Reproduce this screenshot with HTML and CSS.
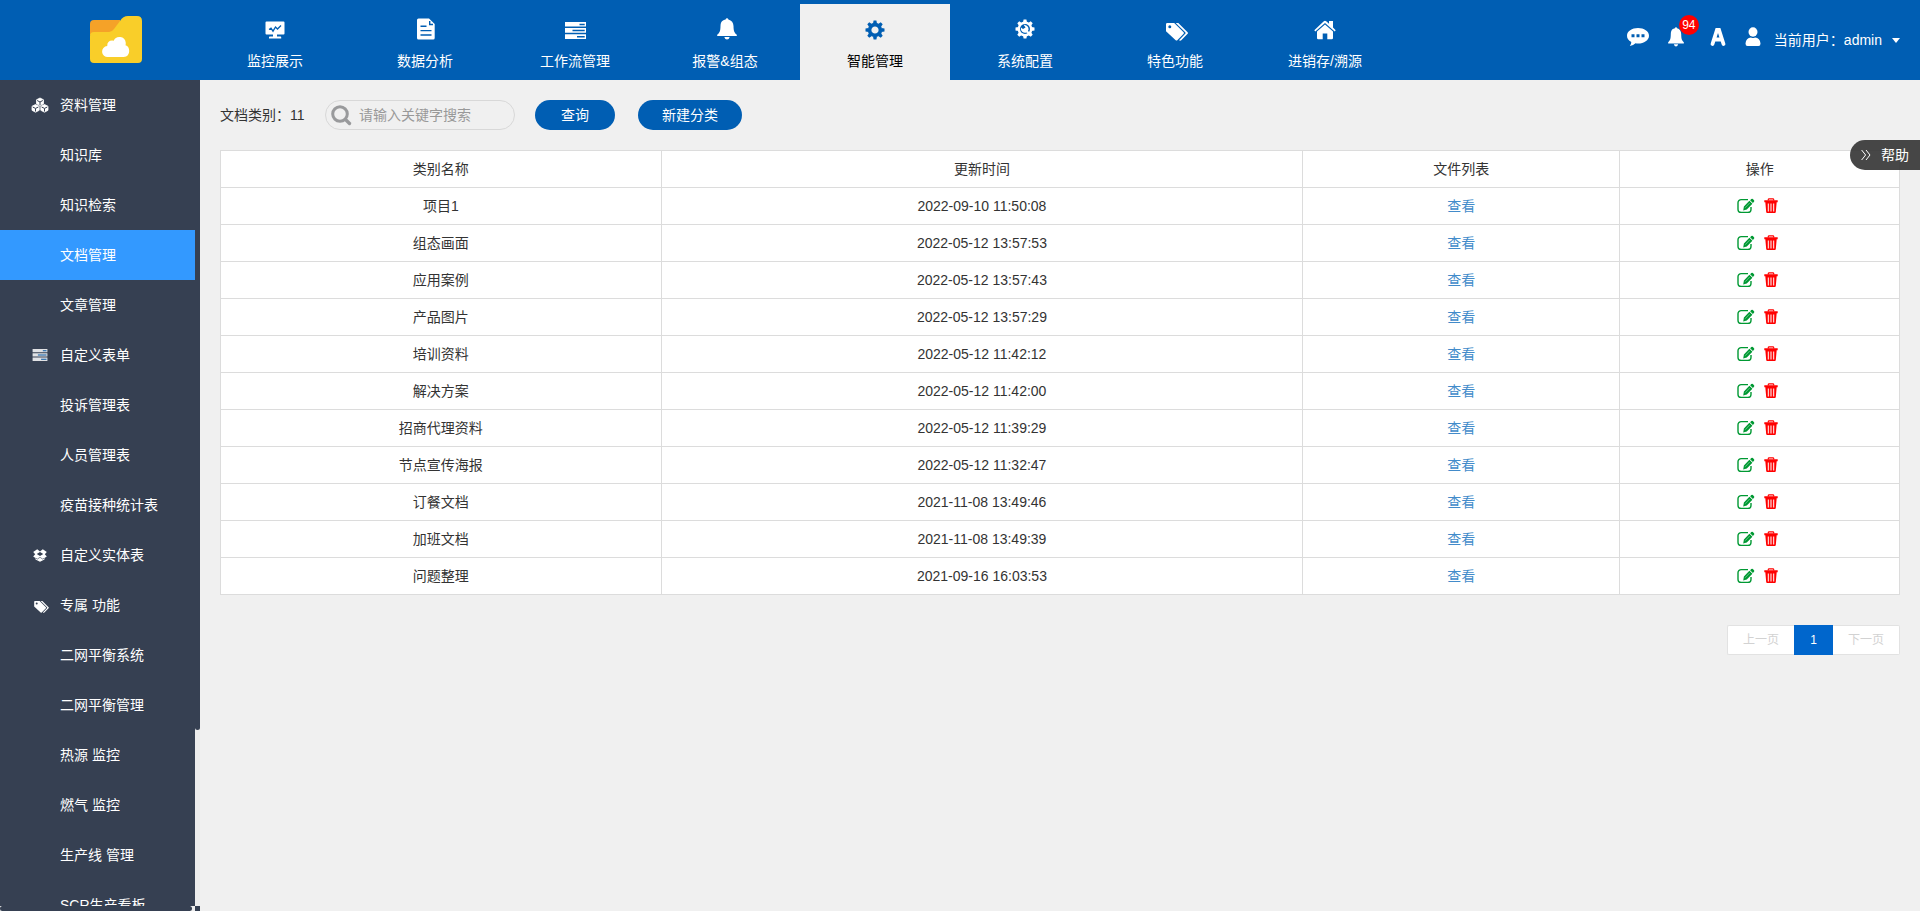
FILE: index.html
```
<!DOCTYPE html>
<html lang="zh-CN">
<head>
<meta charset="utf-8">
<title>文档管理</title>
<link rel="stylesheet" href="styles.css">
</head>
<body>
<svg class="sprite" aria-hidden="true">
  <symbol id="i-edit" viewBox="0 0 18 16">
    <path d="M11 1.600H4.200A3.200 3.200 0 0 0 1 4.800v6.400a3.200 3.200 0 0 0 3.200 3.200h6.600a3.200 3.200 0 0 0 3.200-3.200V9" fill="none" stroke="currentColor" stroke-width="1.400"/>
    <path d="M6.200 12.500l.7-4 5.500-5.700 3 3-5.600 5.700zM13.100 2.300l1.200-1.200q.8-.7 1.600 0l1.100 1.100q.7.800 0 1.600L15.900 5z" fill="currentColor"/>
    <path d="M8.200 9.700l4.500-4.700" stroke="#fff" stroke-width=".4"/>
  </symbol>
  <symbol id="i-trash" viewBox="0 0 14 16">
    <path d="M4.300 2.500V1.600q0-.8.800-.8h3.800q.8 0 .8.800v.9" fill="none" stroke="currentColor" stroke-width="1.200"/>
    <path d="M.3 2.300h13.400v2H.3zM1.300 4h11.400l-.9 10q-.1 1-1 1H3.200q-.9 0-1-1z" fill="currentColor"/>
    <path d="M4.400 5.500v8M7 5.500v8M9.600 5.500v8" stroke="#fff" stroke-width="1.300" opacity=".8"/>
  </symbol>
  <symbol id="i-tags" viewBox="0 0 22 18">
    <path d="M0 1.200Q0 0 1.200 0h7L17.600 9.200q.8.800 0 1.600l-6.300 6.400q-.8.800-1.600 0L0 8.200zM3.800 2.200a1.500 1.500 0 1 0 0 3 1.500 1.500 0 0 0 0-3z" fill="currentColor" fill-rule="evenodd"/>
    <path d="M9.700 0h2.600l9.300 9.200q.8.800 0 1.600l-6.300 6.400q-1 .9-2.300 0l6.200-6.400q.8-.8 0-1.600z" fill="currentColor"/>
  </symbol>
  <symbol id="i-bars" viewBox="0 0 21 17">
    <path d="M0 0h21v4.600H0zM0 6h21v4.800H0zM0 12.200h21V17H0z" fill="currentColor"/>
    <path class="slot" d="M14.500 1.800h5.200v1.500h-5.200zM7.500 7.800h12.200v1.500H7.500zM12 13.900h7.700v1.500H12z"/>
  </symbol>
  <symbol id="i-bell" viewBox="0 0 20 22">
    <path d="M10 .3q1.200 0 1.400 1.200Q16.300 2.800 16.500 8c.1 5 .7 6.600 3.300 8.700v1.400H.2v-1.400C2.800 14.600 3.400 13 3.500 8 3.700 2.800 6.400 2 8.600 1.500Q8.800.3 10 .3zM7.300 19h5.400q-.8 2.500-2.700 2.500T7.300 19z" fill="currentColor"/>
  </symbol>
</svg>

<header class="topbar">
  <a class="logo" href="#" aria-label="首页">
    <svg width="54" height="48" viewBox="0 0 54 48">
      <path d="M1 19V8q0-4 4-4h26v15z" fill="#f5a228"/>
      <path d="M1 20q0-4 4-4h15q3 0 5-3l6-8q3-5 8-5h9q5 0 5 5V43q0 4-4 4H5q-4 0-4-4z" fill="#f9ce29"/>
      <path d="M19 41a5.500 5.500 0 0 1-.8-11q0-5.500 5-5.500 1 0 1.500.3a6.300 6.300 0 0 1 12 1.700q.2 1.500-.2 2.800 3.700 1.300 3.700 5.700 0 5.500-5.500 6z" fill="#fff"/>
    </svg>
  </a>
  <nav class="nav" aria-label="主导航">
    <a class="nav-item" href="#"><span class="nav-icon"><svg width="20" height="20" viewBox="0 0 20 20"><path d="M1.500 1.500h17q1 0 1 1v11q0 1-1 1H12v2h3.500q.7 0 .7.700v1.300H4v-1.300q0-.7.700-.7H8v-2H1.500q-1 0-1-1v-11q0-1 1-1z" fill="#fff"/><path d="M4 9.500l2-1.300 2 3L10.500 7l2 2L16 5.500" fill="none" stroke="#005eb3" stroke-width="1.300"/></svg></span>监控展示</a>
    <a class="nav-item" href="#"><span class="nav-icon"><svg width="20" height="24" viewBox="-2 0 20 24"><path d="M1.500.5H12L17.700 6v14q0 1.500-1.500 1.500H1.500Q0 21.500 0 20V2Q0 .5 1.500.5z" fill="#fff"/><path d="M3.500 8.200h6M3.500 12.600h11M3.500 17h11M12.700 3v3.500H16" fill="none" stroke="#005eb3" stroke-width="1.400"/></svg></span>数据分析</a>
    <a class="nav-item" href="#"><span class="nav-icon"><svg width="21" height="17"><use href="#i-bars"/></svg></span>工作流管理</a>
    <a class="nav-item" href="#"><span class="nav-icon"><svg width="24" height="24"><use href="#i-bell" x="4" width="20" height="22"/></svg></span>报警&amp;组态</a>
    <a class="nav-item active" href="#" aria-current="page"><span class="nav-icon"><svg width="20" height="20" viewBox="-10 -10 20 20" fill="#005eb3"><circle r="5.400" fill="none" stroke="#005eb3" stroke-width="3.600"/><path id="teeth" d="M-2-6.500l.6-3h2.800l.6 3zM-2 6.500l.6 3h2.800l.6-3zM-6.500-2l-3 .6v2.800l3 .6zM6.500-2l3 .6v2.800l-3 .6z"/><use href="#teeth" transform="rotate(45)"/></svg></span>智能管理</a>
    <a class="nav-item" href="#"><span class="nav-icon"><svg width="20" height="22" viewBox="-10 -10 20 22" fill="#fff"><circle r="7.400"/><use href="#teeth"/><use href="#teeth" transform="rotate(45)"/><circle r="5" fill="#005eb3"/><path d="M-1.500-4.500l1.500.5A4 4 0 0 1 3 2l3.800 3.300-1.700 1.700L1.500 3.500A4.200 4.200 0 0 1-4-1.500L-2 0 .5-1.500z"/></svg></span>系统配置</a>
    <a class="nav-item" href="#"><span class="nav-icon"><svg width="26" height="22"><use href="#i-tags" x="4" y="4" width="22" height="18"/></svg></span>特色功能</a>
    <a class="nav-item" href="#"><span class="nav-icon"><svg width="22" height="20" viewBox="0 0 22 20" fill="#fff"><path d="M9.800 1.200q1.200-1 2.400 0L15 3.800V1h4v6.500l2.700 2.700-1 1.200L11 2.900 1.300 11.400l-1-1.200z"/><path d="M11 4.500l8 7V18q0 1.200-1.200 1.200h-4.500v-5.700H8.700v5.700H4.200Q3 19.200 3 18v-6.500z"/></svg></span>进销存/溯源</a>
  </nav>
  <div class="tools">
    <button class="tool" aria-label="消息"><svg width="24" height="20" viewBox="0 0 24 20"><path d="M12 1C18 1 23 4.200 23 8.700s-5 7.800-11 7.800q-1.300 0-2.500-.2-2 2.200-5.700 2.600 1.500-1.700 1.500-4Q1 12.700 1 8.700C1 4.200 6 1 12 1z" fill="#fff"/><path d="M7 7.300v3M12 7.300v3M17 7.300v3" stroke="#005eb3" stroke-width="3"/></svg></button>
    <button class="tool" aria-label="报警 94"><svg width="16" height="20" viewBox="0 0 20 22" preserveAspectRatio="none"><use href="#i-bell" width="20" height="22"/></svg><span class="badge">94</span></button>
    <button class="tool" aria-label="字体"><svg width="16" height="20" viewBox="0 0 16 20"><path d="M2.500 17L7 3h2L13.500 17M4.500 12.500h7" fill="none" stroke="#fff" stroke-width="3.800" stroke-linecap="round"/></svg></button>
    <button class="tool" aria-label="用户"><svg width="16" height="20" viewBox="0 0 16 20" fill="#fff"><ellipse cx="8" cy="5" rx="4.500" ry="4.700"/><path d="M.5 16.500Q1 10.800 6 10.500q2 1 4 0 5 .3 5.500 6 0 2.500-2 2.500h-11q-2 0-2-2.500z"/></svg></button>
    <button class="user">当前用户：admin<span class="caret"></span></button>
  </div>
</header>

<div class="body">
  <aside class="sidebar">
    <div class="menu-row">
      <nav class="menu" aria-label="侧边栏">
        <a class="group" href="#"><svg width="18" height="16" viewBox="0 0 18 16" fill="#fff"><path d="M9 1l3.500 1.800v4L9 8.600 5.500 6.800v-4zM4.500 7.500L8.200 9.300v4L4.500 15.200 1 13.300v-4zM13.500 7.500L17 9.300v4l-3.500 1.900L9.800 13.300v-4z" stroke="#fff" stroke-width=".8"/><path d="M6.200 3.500L9 5l2.800-1.500M1.700 10l2.800 1.400L7.400 10M10.600 10l2.900 1.400 2.800-1.400M4.500 11.500v3M13.500 11.500v3M9 5v3" stroke="#364052" stroke-width="1" fill="none"/></svg>资料管理</a>
        <a href="#">知识库</a>
        <a href="#">知识检索</a>
        <a class="current" href="#" aria-current="page">文档管理</a>
        <a href="#">文章管理</a>
        <a class="group" href="#"><svg class="dim" width="15" height="12"><use href="#i-bars"/></svg>自定义表单</a>
        <a href="#">投诉管理表</a>
        <a href="#">人员管理表</a>
        <a href="#">疫苗接种统计表</a>
        <a class="group" href="#"><svg width="14" height="13" viewBox="0 0 14 13" fill="#fff"><path d="M4.200.3L7 2.400 9.800.3 13.800 3l-2 2.200 2 2.200-2.300 1.600v1.500L7 12.700l-4.500-2.200V9L.2 7.400l2-2.200L.2 3z"/><path d="M7 2.900L10.200 5 7 7.100 3.800 5z" fill="#364052"/><path d="M2.800 9.300l1.700.7L7 8.300l2.500 1.700 1.700-.7" stroke="#364052" stroke-width=".6" fill="none"/></svg>自定义实体表</a>
        <a class="group" href="#"><svg width="18" height="16"><use href="#i-tags" x="3" y="4" width="15" height="12"/></svg>专属 功能</a>
        <a href="#">二网平衡系统</a>
        <a href="#">二网平衡管理</a>
        <a href="#">热源 监控</a>
        <a href="#">燃气 监控</a>
        <a href="#">生产线 管理</a>
        <a href="#">SCR生产看板</a>
      </nav>
      <div class="vtrack"><div class="vthumb"></div></div>
    </div>
    <div class="htrack"><div class="hthumb"></div></div>
  </aside>

  <main class="content">
    <form class="filters">
      <span class="count">文档类别：11</span>
      <label class="search">
        <svg width="21" height="22" viewBox="0 0 21 22" fill="none" stroke="#999a9c"><circle cx="9" cy="10" r="7.300" stroke-width="3"/><path d="M14.500 15.500l4 4" stroke-width="3.400" stroke-linecap="round"/></svg>
        <input type="text" placeholder="请输入关键字搜索" aria-label="关键字">
      </label>
      <button class="btn query" type="button">查询</button>
      <button class="btn create" type="button">新建分类</button>
    </form>
    <table class="grid">
      <colgroup><col class="c-name"><col class="c-time"><col class="c-list"><col class="c-ops"></colgroup>
      <thead><tr><th>类别名称</th><th>更新时间</th><th>文件列表</th><th>操作</th></tr></thead>
      <tbody id="rows"></tbody>
    </table>
    <nav class="pager" aria-label="分页">
      <button class="side" disabled>上一页</button><button class="page" aria-current="page">1</button><button class="side" disabled>下一页</button>
    </nav>
  </main>
</div>
<button class="help"><svg width="10" height="12" viewBox="0 0 10 12" fill="none" stroke="#fff"><path d="M.6 1l4 5-4 5M5 1l4 5-4 5"/></svg>帮助</button>
<script src="rows.js"></script>
</body>
</html>
```
FILE: rows.js
```
const rows = [
  ["项目1", "2022-09-10 11:50:08"],
  ["组态画面", "2022-05-12 13:57:53"],
  ["应用案例", "2022-05-12 13:57:43"],
  ["产品图片", "2022-05-12 13:57:29"],
  ["培训资料", "2022-05-12 11:42:12"],
  ["解决方案", "2022-05-12 11:42:00"],
  ["招商代理资料", "2022-05-12 11:39:29"],
  ["节点宣传海报", "2022-05-12 11:32:47"],
  ["订餐文档", "2021-11-08 13:49:46"],
  ["加班文档", "2021-11-08 13:49:39"],
  ["问题整理", "2021-09-16 16:03:53"]
];
document.getElementById("rows").innerHTML = rows.map(([name, time]) => `
  <tr><td>${name}</td><td>${time}</td><td><a href="#">查看</a></td>
  <td><div class="ops">
    <button class="edit" aria-label="编辑"><svg width="18" height="16"><use href="#i-edit"/></svg></button>
    <button class="del" aria-label="删除"><svg width="14" height="16"><use href="#i-trash"/></svg></button>
  </div></td></tr>`).join("");
```
FILE: styles.css
```
* { box-sizing: border-box; }
body {
  margin: 0;
  height: 100vh;
  display: flex;
  flex-direction: column;
  overflow: hidden;
  background: #f0f0f0;
  color: #333;
  font: 14px/20px "Liberation Sans", "Noto Sans CJK SC", sans-serif;
}
a { color: inherit; text-decoration: none; }
button { border: 0; padding: 0; background: none; color: inherit; font: inherit; cursor: pointer; }
svg { display: block; flex: none; }
.sprite { position: absolute; width: 0; height: 0; }

.topbar { flex: none; display: flex; height: 80px; background: #005eb3; color: #fff; }
.logo { width: 200px; flex: none; padding: 16px 0 0 89px; }
.nav { display: flex; padding-top: 4px; }
.nav-item { width: 150px; display: flex; flex-direction: column; align-items: center; }
.nav-icon { height: 47px; padding-top: 5px; display: flex; align-items: center; }
.nav-item.active { background: #f0f0f0; color: #000; }
.slot { fill: #005eb3; }
.tools { margin-left: auto; display: flex; padding: 27px 20px 0 0; }
.tool { position: relative; height: 20px; margin-right: 18px; }
.tool + .tool { margin-right: 26px; }
.tool + .tool + .tool { margin-right: 19px; }
.tool + .tool + .tool + .tool { margin-right: 13px; }
.badge {
  position: absolute; left: 11px; top: -12px;
  width: 20px; height: 20px; border-radius: 10px;
  background: #f00; font-size: 12px; text-align: center;
}
.user { display: flex; align-items: center; height: 26px; }
.caret { margin-left: 10px; border: 4px solid transparent; border-top: 5px solid #fff; border-bottom: 0; }

.body { flex: 1; min-height: 0; display: flex; }
.sidebar { flex: none; width: 200px; display: flex; flex-direction: column; background: #364052; color: #fff; }
.menu-row { flex: 1; min-height: 0; display: flex; }
.menu { flex: 1; overflow: hidden; }
.menu a { display: flex; align-items: center; height: 50px; padding-left: 60px; }
.menu .group { padding-left: 31px; }
.menu .group svg { width: 18px; margin-right: 11px; }
.menu .dim { opacity: .85; }
.menu .dim .slot { fill: #364052; }
.menu .current { background: #3399ff; }
.vtrack { width: 5px; background: #ececec; }
.vthumb { height: 650px; max-height: 79%; background: #364052; border-radius: 0 0 3px 3px; }
.htrack { height: 5px; margin-right: 5px; background: #ececec; }
.hthumb { height: 5px; margin-right: 3px; background: #364052; border-radius: 3px; }

.content { flex: 1; min-width: 0; padding: 20px; }
.filters { display: flex; align-items: center; height: 30px; margin-bottom: 20px; }
.count { width: 105px; }
.search {
  display: flex; align-items: center; width: 190px; height: 30px; padding-left: 5px;
  border: 1px solid #d8d8d8; border-radius: 15px;
}
.search input { width: 140px; margin-left: 7px; border: 0; padding: 0; background: none; font: inherit; outline: 0; }
.search input::placeholder { color: #999; }
.btn { height: 30px; padding: 0 23px; border-radius: 15px; background: #005eb3; color: #fff; }
.query { width: 80px; margin: 0 23px 0 20px; }
.create { width: 104px; }

.grid { width: 100%; table-layout: fixed; border-collapse: collapse; background: #fff; text-align: center; }
.c-name { width: 26.250%; }
.c-time { width: 38.200%; }
.c-list { width: 18.900%; }
.c-ops { width: 16.650%; }
.grid th, .grid td { height: 37px; padding: 0; border: 1px solid #dcdcdc; font-weight: 400; }
.grid a { color: #428bca; }
.ops { display: flex; justify-content: center; gap: 9px; padding-right: 5px; }
.edit { color: #009933; }
.del { color: #f00; }

.pager { display: flex; justify-content: flex-end; margin-top: 30px; font-size: 12px; }
.pager button { height: 30px; }
.side { width: 67px; background: #fff; border: 1px solid #e2e2e2; color: #d2d2d2; }
.side:first-child { border-right: 0; border-radius: 2px 0 0 2px; }
.side:last-child { border-left: 0; border-radius: 0 2px 2px 0; }
.page { width: 39px; background: #0066cc; color: #fff; }

.help {
  position: absolute; right: 0; top: 140px;
  display: flex; align-items: center; gap: 10px;
  height: 30px; padding: 0 11px; border-radius: 15px 0 0 15px;
  background: rgba(51, 51, 51, .9); color: #fff;
}
```
